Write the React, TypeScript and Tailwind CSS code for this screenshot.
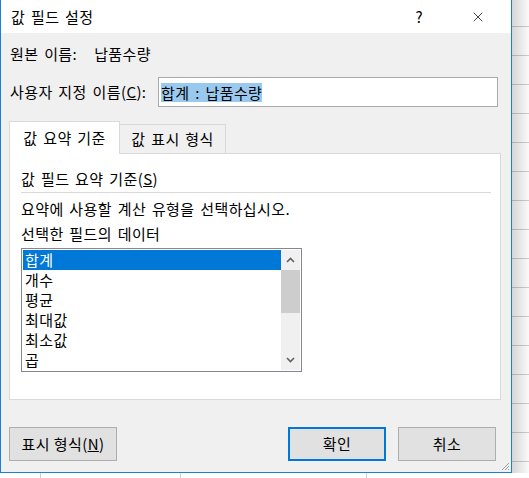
import { X } from 'lucide-react';

const items = ['합계', '개수', '평균', '최대값', '최소값', '곱'];

export default function App() {
    return (
        <div className="flex h-[478px] w-[529px] flex-col overflow-hidden bg-white bg-[repeating-linear-gradient(to_bottom,transparent_0px,transparent_26px,#cfcfcf_26px,#cfcfcf_27px,transparent_27px,transparent_29px)] font-['Noto_Sans_CJK_KR',sans-serif] text-[15px] tracking-[0.4px] text-black [word-spacing:2px]">
            <div className="flex h-[473px]">
                <div className="flex h-[473px] w-[512px] shrink-0 flex-col border-x border-b border-[#1c7fd6] bg-[#f0f0f0]">
                    {/* title bar */}
                    <div className="flex h-[33px] shrink-0 items-center bg-white pl-[10px]">
                        <span className="leading-[20px]">값 필드 설정</span>
                        <span className="ml-auto mr-[47px] text-[15px] leading-[20px]">?</span>
                        <X className="mr-[25px] h-[16px] w-[16px]" strokeWidth={1.1} />
                    </div>

                    <div className="ml-[9px] mt-[11px] flex leading-[20px]">
                        <span>원본 이름:</span>
                        <span className="ml-[17px]">납품수량</span>
                    </div>

                    <div className="ml-[9px] mt-[13px] flex items-center">
                        <span className="leading-[20px]">
                            사용자 지정 이름(<span className="underline">C</span>):
                        </span>
                        <div className="ml-auto mr-[13px] flex h-[30px] w-[340px] items-center border border-[#a9a9a9] bg-white px-[2px]">
                            <span className="bg-[#99c9ef] leading-[19px]">합계 : 납품수량</span>
                        </div>
                    </div>

                    {/* tabs */}
                    <div className="ml-[8px] mt-[14px] flex items-end">
                        <div className="relative z-10 -mb-px flex h-[33px] w-[111px] items-center justify-center border border-b-0 border-[#d9d9d9] bg-white pb-px leading-[20px]">
                            값 요약 기준
                        </div>
                        <div className="flex h-[29px] w-[106px] items-center justify-center border border-b-0 border-l-0 border-[#d9d9d9] bg-[#f0f0f0] leading-[20px]">
                            값 표시 형식
                        </div>
                    </div>
                    <div className="ml-[8px] flex h-[248px] w-[492px] flex-col border border-[#d9d9d9] bg-white px-[11px]">
                        <div className="mt-[15px] leading-[20px]">
                            값 필드 요약 기준(<span className="underline">S</span>)
                        </div>
                        <div className="mt-[3px] h-px w-[470px] bg-[#d9d9d9]" />
                        <div className="mt-[6px] leading-[20px]">
                            요약에 사용할 계산 유형을 선택하십시오.
                        </div>
                        <div className="mt-[5px] leading-[20px]">
                            선택한 필드의 데이터
                        </div>

                        {/* list box */}
                        <div className="mt-[4px] flex h-[124px] w-[281px] border border-[#828790] bg-white p-px">
                            <div className="flex flex-1 flex-col">
                                {items.map((item, i) => (
                                    <div
                                        key={item}
                                        className={
                                            i === 0
                                                ? 'h-[20px] bg-[#0078d7] pl-[2px] leading-[20px] text-white'
                                                : 'h-[20px] pl-[2px] leading-[20px]'
                                        }
                                    >
                                        {item}
                                    </div>
                                ))}
                            </div>
                            <div className="flex w-[19px] flex-col bg-[#f0f0f0]">
                                <div className="flex h-[20px] items-center justify-center">
                                    <svg width="9" height="6" viewBox="0 0 9 6">
                                        <path d="M1 5L4.5 1.5L8 5" fill="none" stroke="#606060" strokeWidth="1.6" />
                                    </svg>
                                </div>
                                <div className="h-[43px] bg-[#cdcdcd]" />
                                <div className="flex-1" />
                                <div className="flex h-[20px] items-center justify-center">
                                    <svg width="9" height="6" viewBox="0 0 9 6">
                                        <path d="M1 1L4.5 4.5L8 1" fill="none" stroke="#606060" strokeWidth="1.6" />
                                    </svg>
                                </div>
                            </div>
                        </div>
                    </div>

                    {/* buttons */}
                    <div className="ml-[8px] mt-[27px] flex">
                        <button
                            type="button"
                            className="h-[34px] w-[108px] border border-[#adadad] bg-[#e1e1e1] leading-[20px]"
                        >
                            표시 형식(<span className="underline">N</span>)
                        </button>
                        <button
                            type="button"
                            className="ml-auto h-[34px] w-[98px] border-2 border-[#0078d7] bg-[#e1e1e1] leading-[20px]"
                        >
                            확인
                        </button>
                        <button
                            type="button"
                            className="ml-[12px] mr-[15px] h-[34px] w-[98px] border border-[#adadad] bg-[#e1e1e1] leading-[20px]"
                        >
                            취소
                        </button>
                    </div>
                    <div className="mt-auto flex justify-end pb-px pr-px">
                        <svg width="10" height="10" viewBox="0 0 10 10">
                            <path d="M9 2L2 9M9 5L5 9M9 8L8 9" stroke="#a0a0a0" strokeWidth="1" />
                        </svg>
                    </div>
                </div>
                <div className="flex-1 bg-[linear-gradient(to_right,rgba(0,0,0,0.16),rgba(0,0,0,0.02))]" />
            </div>
            <div className="flex h-[5px] bg-white">
                <div className="w-[41px] border-r border-[#cfcfcf]" />
                <div className="w-[140px] border-r border-[#cfcfcf]" />
                <div className="w-[186px] border-r border-[#cfcfcf]" />
            </div>
        </div>
    );
}
